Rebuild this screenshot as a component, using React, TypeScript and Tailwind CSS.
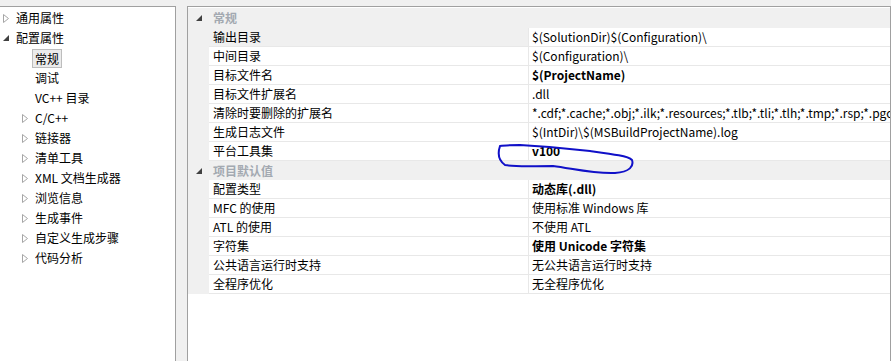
import React from "react";

const font = { fontFamily: "'Noto Sans CJK SC', 'Noto Sans', sans-serif" };

function Collapsed() {
  return (
    <svg width="6" height="9" viewBox="0 0 6 9" className="shrink-0">
      <path d="M0.5 0.5 L5.5 4.5 L0.5 8.5 Z" fill="none" stroke="#a6a6a6" strokeWidth="1" />
    </svg>
  );
}

function Expanded() {
  return (
    <svg width="6" height="6" viewBox="0 0 6 6" className="shrink-0">
      <path d="M6 0 L6 6 L0 6 Z" fill="#404040" />
    </svg>
  );
}

type TreeItem = { label: string; level: 0 | 1; arrow: "open" | "closed" | "none"; selected?: boolean };

const tree: TreeItem[] = [
  { label: "通用属性", level: 0, arrow: "closed" },
  { label: "配置属性", level: 0, arrow: "open" },
  { label: "常规", level: 1, arrow: "none", selected: true },
  { label: "调试", level: 1, arrow: "none" },
  { label: "VC++ 目录", level: 1, arrow: "none" },
  { label: "C/C++", level: 1, arrow: "closed" },
  { label: "链接器", level: 1, arrow: "closed" },
  { label: "清单工具", level: 1, arrow: "closed" },
  { label: "XML 文档生成器", level: 1, arrow: "closed" },
  { label: "浏览信息", level: 1, arrow: "closed" },
  { label: "生成事件", level: 1, arrow: "closed" },
  { label: "自定义生成步骤", level: 1, arrow: "closed" },
  { label: "代码分析", level: 1, arrow: "closed" },
];

type Row =
  | { kind: "cat"; label: string; h: string }
  | { kind: "prop"; name: string; value: string; bold?: boolean; active?: boolean };

const rows: Row[] = [
  { kind: "cat", label: "常规", h: "h-[20px]" },
  { kind: "prop", name: "输出目录", value: "$(SolutionDir)$(Configuration)\\", active: true },
  { kind: "prop", name: "中间目录", value: "$(Configuration)\\" },
  { kind: "prop", name: "目标文件名", value: "$(ProjectName)", bold: true },
  { kind: "prop", name: "目标文件扩展名", value: ".dll" },
  {
    kind: "prop",
    name: "清除时要删除的扩展名",
    value: "*.cdf;*.cache;*.obj;*.ilk;*.resources;*.tlb;*.tli;*.tlh;*.tmp;*.rsp;*.pgc;*.pgd;*.meta;$(TargetPath)",
  },
  { kind: "prop", name: "生成日志文件", value: "$(IntDir)\\$(MSBuildProjectName).log" },
  { kind: "prop", name: "平台工具集", value: "v100", bold: true },
  { kind: "cat", label: "项目默认值", h: "h-[19px]" },
  { kind: "prop", name: "配置类型", value: "动态库(.dll)", bold: true },
  { kind: "prop", name: "MFC 的使用", value: "使用标准 Windows 库" },
  { kind: "prop", name: "ATL 的使用", value: "不使用 ATL" },
  { kind: "prop", name: "字符集", value: "使用 Unicode 字符集", bold: true },
  { kind: "prop", name: "公共语言运行时支持", value: "无公共语言运行时支持" },
  { kind: "prop", name: "全程序优化", value: "无全程序优化" },
];

export default function App() {
  return (
    <div
      className="w-[891px] h-[361px] bg-[#f0f0f0] flex items-start pt-[6px] overflow-hidden text-[12px] text-black relative"
      style={font}
    >
      {/* tree */}
      <div className="w-[176px] h-[355px] shrink-0 bg-white border-t border-r border-[#a0a0a0] pt-px">
        {tree.map((t) => (
          <div key={t.label} className="h-[20px] flex items-center">
            <div className={`${t.level === 0 ? "w-[16px] pl-[3px]" : "w-[35px] pl-[22px]"} flex items-center shrink-0`}>
              {t.arrow === "closed" && <Collapsed />}
              {t.arrow === "open" && <Expanded />}
            </div>
            {t.selected ? (
              <span className="-ml-[3px] px-[2px] h-[19px] leading-[17px] border border-[#bdbdbd] bg-[#ebebeb]">{t.label}</span>
            ) : (
              <span className="whitespace-nowrap">{t.label}</span>
            )}
          </div>
        ))}
      </div>

      {/* property grid */}
      <div className="ml-[11px] flex-1 h-[355px] bg-white border-t border-l border-r border-[#a0a0a0] pt-px overflow-hidden">
        {rows.map((r, i) =>
          r.kind === "cat" ? (
            <div key={i} className={`${r.h} bg-[#f0f0f0] flex items-center`}>
              <div className="w-[21px] pl-[8px] flex items-center">
                <Expanded />
              </div>
              <span className="pl-[4px] font-bold text-[#a3a9b1]">{r.label}</span>
            </div>
          ) : (
            <div key={i} className="h-[19px] flex">
              <div className="w-[21px] shrink-0 bg-[#f0f0f0]" />
              <div
                className={`w-[319px] shrink-0 pl-[4px] leading-[18px] border-b border-[#e8e8e8] whitespace-nowrap ${
                  r.active ? "bg-[#f0f0f0]" : ""
                }`}
              >
                {r.name}
              </div>
              <div
                className={`flex-1 pl-[3px] leading-[18px] border-l border-b border-[#e8e8e8] whitespace-nowrap overflow-hidden ${
                  r.bold ? "font-bold" : ""
                }`}
              >
                {r.value}
              </div>
            </div>
          )
        )}
      </div>

      {/* hand-drawn mark around v100 */}
      <svg className="absolute left-0 top-0 pointer-events-none" width="891" height="361">
        <path
          d="M500 146 C498 152 498 160 505 165 C515 167 530 166 553 166 C575 169 595 174 615 173 C630 172 634 166 632 160 C628 156 612 154 590 151 C565 148 540 146 520 145 C512 145 505 145 500 146"
          fill="none"
          stroke="#1010c8"
          strokeWidth="2"
          strokeLinecap="round"
        />
      </svg>
    </div>
  );
}
